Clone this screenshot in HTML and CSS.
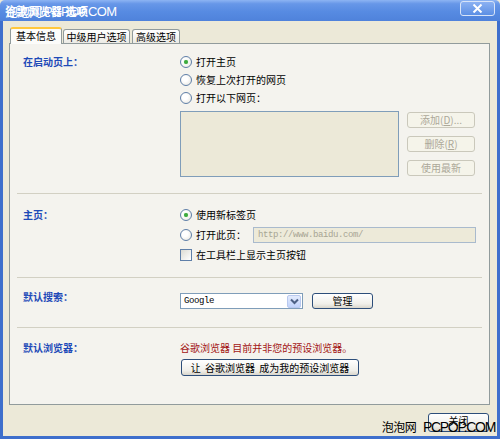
FILE: index.html
```html
<!DOCTYPE html>
<html lang="zh-CN">
<head>
<meta charset="utf-8">
<title>谷歌浏览器 选项</title>
<link rel="stylesheet" href="styles.css">
</head>
<body>
<div class="window">
  <div class="titlebar">
    <span class="title">谷歌浏览器 选项</span>
    <span class="wm wm-title"><span class="wm-cn">泡泡网</span> PCPOP.COM</span>
    <span class="close-x">
      <svg width="11" height="9" viewBox="0 0 11 9"><path d="M1.5 0.5 L9.5 8.5 M9.5 0.5 L1.5 8.5" stroke="#fff" stroke-width="2" fill="none"/></svg>
    </span>
  </div>

  <div class="client">
    <div class="tabs">
      <span class="tab active">基本信息</span>
      <span class="tab t2">中级用户选项</span>
      <span class="tab t3">高级选项</span>
    </div>

    <div class="panel">
      <section class="group g-start">
        <div class="label">在启动页上：</div>
        <div class="content">
          <div class="row"><span class="radio checked"></span>打开主页</div>
          <div class="row"><span class="radio"></span>恢复上次打开的网页</div>
          <div class="row"><span class="radio"></span>打开以下网页：</div>
          <div class="pages">
            <div class="listbox"></div>
            <div class="side-btns">
              <span class="btn disabled">添加(<u>D</u>)...</span>
              <span class="btn disabled">删除(<u>R</u>)</span>
              <span class="btn disabled">使用最新</span>
            </div>
          </div>
        </div>
      </section>

      <section class="group g-home">
        <div class="label">主页：</div>
        <div class="content">
          <div class="row"><span class="radio checked"></span>使用新标签页</div>
          <div class="row row-url"><span class="radio"></span>打开此页：<span class="url">http://www.baidu.com/</span></div>
          <div class="row"><span class="check"></span>在工具栏上显示主页按钮</div>
        </div>
      </section>

      <section class="group g-search">
        <div class="label">默认搜索：</div>
        <div class="content inline">
          <span class="select"><span class="select-val">Google</span><span class="drop">
            <svg width="9" height="7" viewBox="0 0 9 7"><path d="M1 1.5 L4.5 5 L8 1.5" stroke="#4D6185" stroke-width="2" fill="none"/></svg>
          </span></span>
          <span class="btn manage">管理</span>
        </div>
      </section>

      <section class="group g-browser">
        <div class="label">默认浏览器：</div>
        <div class="content">
          <div class="warn">谷歌浏览器 目前并非您的预设浏览器。</div>
          <span class="btn make-default">让 谷歌浏览器 成为我的预设浏览器</span>
        </div>
      </section>
    </div>

    <div class="footer">
      <span class="btn close-btn">关闭</span>
    </div>
  </div>

  <span class="wm wm-bottom"><span class="wm-cn">泡泡网</span> PCPOP.COM</span>
</div>
</body>
</html>
```

FILE: styles.css
```css
* { box-sizing: border-box; }

body {
  margin: 0;
  font: 10px/12px "Noto Sans CJK SC", "Noto Sans", sans-serif;
  color: #000;
  background: #ECE9D8;
}

.window {
  position: relative;
  width: 500px;
  height: 439px;
  display: flex;
  flex-direction: column;
  background: #ECE9D8;
}

/* ---- title bar ---- */
.titlebar {
  position: relative;
  height: 21px;
  flex: none;
  display: flex;
  align-items: center;
  padding-left: 5px;
  background: linear-gradient(#8DB4F3 0%, #6797E8 18%, #578BE2 55%, #4F82DB 100%);
  border-radius: 5px 5px 0 0;
}

.title {
  color: #fff;
  font-weight: bold;
  font-size: 11px;
  letter-spacing: 0.5px;
}

.wm {
  position: absolute;
  white-space: nowrap;
  font-family: "Liberation Sans", "Noto Sans CJK SC", sans-serif;
  font-size: 13px;
  line-height: 14px;
  letter-spacing: -0.6px;
}
.wm-cn { font-family: "Noto Sans CJK SC", sans-serif; letter-spacing: -1px; }

.wm-title {
  left: 5px;
  top: 4px;
  color: #fff;
}

.close-x {
  position: absolute;
  right: 5px;
  top: 1px;
  width: 35px;
  height: 15px;
  border: 1px solid #D8E4F8;
  border-radius: 3px;
  background: linear-gradient(#8BB1F2, #5C8FE4);
  display: flex;
  align-items: center;
  justify-content: center;
}

/* ---- client area ---- */
.client {
  flex: 1;
  display: flex;
  flex-direction: column;
  border-left: 3px solid #3E6FCC;
  border-right: 3px solid #3E6FCC;
  border-bottom: 3px solid #3E6FCC;
  padding: 6px 7px 0 6px;
}

.tabs {
  height: 16px;
  display: flex;
  align-items: flex-end;
  gap: 1px;
  position: relative;
  z-index: 1;
}

.tab {
  height: 14px;
  border: 1px solid #919B9C;
  border-bottom: none;
  border-radius: 3px 3px 0 0;
  background: linear-gradient(#FFFFFF, #ECEBE5);
  display: flex;
  align-items: center;
  justify-content: center;
  line-height: 12px;
}

.tab.active {
  margin-left: 1px;
  width: 52px;
  height: 17px;
  margin-bottom: -1px;
  background: #FCFCFA;
  border-top: 2px solid #FFC83C;
  padding-bottom: 1px;
}
.tab.t2 { width: 67px; }
.tab.t3 { width: 48px; margin-left: 1px; }

.panel {
  height: 362px;
  flex: none;
  border: 1px solid #919B9C;
  background: #F4F3EE;
  padding: 0 7px;
}

/* ---- option groups ---- */
.group {
  display: grid;
  grid-template-columns: 157px 1fr;
  padding-left: 6px;
}
.group + .group { border-top: 1px solid #D2D0C3; }

.label {
  color: #1E4AB8;
  font-weight: bold;
  line-height: 18px;
}

.g-start { padding: 9px 0 16px 6px; }
.g-home { padding: 12px 0 13px 6px; }
.g-search { padding: 15px 0 18px 6px; }
.g-search .label { line-height: 12px; margin-top: -2px; }
.g-browser { padding: 14px 0 0 6px; }
.g-browser .label { line-height: 12px; margin-top: 0; }

.row {
  height: 18px;
  display: flex;
  align-items: center;
}

.radio {
  width: 12px;
  height: 12px;
  border-radius: 50%;
  border: 1px solid #5F7FA8;
  background: radial-gradient(circle at 40% 40%, #FFFFFF 30%, #E4E2DA 100%);
  margin-right: 4px;
  flex: none;
  display: flex;
  align-items: center;
  justify-content: center;
}
.radio.checked::after {
  content: "";
  width: 4px;
  height: 4px;
  border-radius: 50%;
  background: #3DAA3D;
  box-shadow: 0 0 1px #7ACB7A;
}

.check {
  width: 12px;
  height: 12px;
  border: 1px solid #5F7FA8;
  background: linear-gradient(135deg, #DCDBD3, #FFFFFF);
  margin-right: 4px;
  flex: none;
}

.pages {
  display: flex;
  gap: 8px;
  margin-top: 4px;
}

.listbox {
  width: 219px;
  height: 66px;
  border: 1px solid #7F9DB9;
  background: #ECE9D8;
}

.side-btns {
  display: flex;
  flex-direction: column;
  gap: 8px;
  padding-top: 1px;
}

.btn {
  display: inline-flex;
  align-items: center;
  justify-content: center;
  height: 17px;
  border: 1px solid #2D4E7A;
  border-radius: 3px;
  background: linear-gradient(#FFFFFF, #F0EFEA 70%, #D9D6CC);
  color: #000;
  line-height: 12px;
}

.btn.disabled {
  width: 68px;
  height: 16px;
  border-color: #CAC8BB;
  background: #F5F4EA;
  color: #ACA899;
}
.btn.disabled u { text-decoration: underline; }

.row-url { height: 22px; }
.url {
  margin-left: 7px;
  width: 223px;
  height: 16px;
  border: 1px solid #A9BACD;
  background: #EDEAD9;
  color: #A7A594;
  font-family: "Liberation Mono", monospace;
  font-size: 9px;
  letter-spacing: -0.4px;
  line-height: 14px;
  padding-left: 4px;
}

.inline { display: flex; align-items: center; }

.select {
  width: 123px;
  height: 16px;
  border: 1px solid #7F9DB9;
  background: #fff;
  display: flex;
  align-items: center;
  justify-content: space-between;
  padding: 0 1px 0 3px;
}
.select-val {
  font-family: "Liberation Mono", monospace;
  font-size: 9px;
  letter-spacing: -0.4px;
  line-height: 12px;
}
.drop {
  width: 14px;
  height: 13px;
  border: 1px solid #B9C9EF;
  border-radius: 2px;
  background: linear-gradient(#E3EBFD, #C1D3FB);
  display: flex;
  align-items: center;
  justify-content: center;
}

.manage {
  width: 61px;
  height: 16px;
  margin-left: 9px;
}

.warn {
  color: #A31515;
  line-height: 12px;
}

.make-default {
  width: 178px;
  margin-top: 5px;
  margin-left: 1px;
  word-spacing: 2px;
}

/* ---- footer ---- */
.footer {
  display: flex;
  justify-content: flex-end;
  padding-top: 8px;
  padding-right: 1px;
}

.close-btn {
  width: 61px;
  height: 19px;
  align-items: flex-start;
  padding-top: 1px;
}

.wm-bottom {
  right: 5px;
  bottom: 4px;
  color: #000;
  font-size: 14px;
  line-height: 16px;
  letter-spacing: -1.3px;
}
.wm-bottom .wm-cn { font-size: 12px; letter-spacing: -0.5px; margin-right: 4px; }
```
